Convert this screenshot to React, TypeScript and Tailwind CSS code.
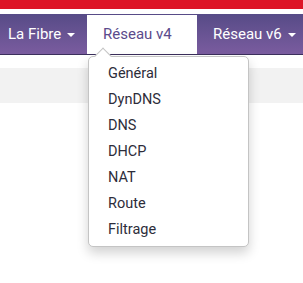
const ITEMS = ['Général', 'DynDNS', 'DNS', 'DHCP', 'NAT', 'Route', 'Filtrage']

function Caret() {
  return <span className="inline-block ml-[6px] mt-[1px] w-0 h-0 border-l-[4px] border-r-[4px] border-t-[4px] border-l-transparent border-r-transparent border-t-white" />
}

export default function App() {
  return (
    <div className="relative w-[303px] h-[283px] overflow-hidden bg-white font-['Roboto',sans-serif]">
      <div className="h-[9px] bg-[#dd1526]" />
      <div className="h-[5px] bg-white" />
      <nav className="flex h-[41px] bg-gradient-to-b from-[#574b87] to-[#7a5c9f] border-b border-[#3b2f5c] text-[15px] text-white">
        <div className="flex items-center w-[87px] pl-[8px]">
          La Fibre
          <Caret />
        </div>
        <div className="flex items-center w-[110px] mt-[1px] bg-white pl-[16px] text-[#5b4b8c]">
          Réseau v4
        </div>
        <div className="flex items-center pl-[16px]">
          Réseau v6
          <Caret />
        </div>
      </nav>
      <div className="mt-[13px] h-[35px] bg-[#f2f2f2]" />

      <div className="absolute left-[88px] top-[56px] w-[161px] h-[191px] rounded-[5px] border border-[#c4c4c4] bg-white shadow-[0_6px_12px_rgba(0,0,0,0.18)]">
        <span className="absolute -top-[7px] left-[8px] w-[12px] h-[12px] rotate-45 bg-white border-l border-t border-[#c4c4c4]" />
        <ul className="relative pt-[4px]">
          {ITEMS.map(item => (
            <li key={item} className="h-[26px] leading-[26px] pl-[19px] text-[14.5px] text-[#2d2d3a]">
              {item}
            </li>
          ))}
        </ul>
      </div>
    </div>
  )
}
